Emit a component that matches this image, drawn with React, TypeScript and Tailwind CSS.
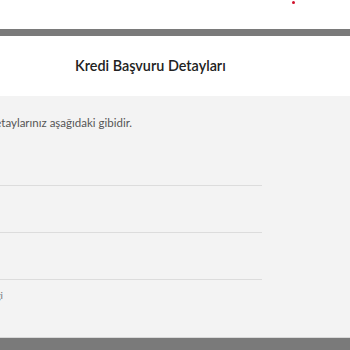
export default function App() {
  return (
    <div className="w-[350px] h-[350px] overflow-hidden bg-[#f3f3f3] flex flex-col font-['Lato',sans-serif]">
      {/* top white strip */}
      <div className="h-[29px] bg-white relative shrink-0">
        <span className="absolute left-[292px] top-[1px] w-[3px] h-[3px] rounded-full bg-[#d0112b]" />
      </div>
      <div className="h-[7px] bg-[#7a7a7a] shrink-0" />
      {/* header */}
      <div className="h-[60px] bg-white flex items-center shrink-0 pl-[75px]">
        <h1 className="text-[14.4px] font-semibold text-[#222]">Kredi Başvuru Detayları</h1>
      </div>
      {/* content */}
      <div className="flex-1 flex flex-col">
        <div className="ml-[-55px] w-[317px]">
          <p className="mt-[19px] text-[11.5px] text-[#555] leading-[16px]">Başvuru detaylarınız aşağıdaki gibidir.</p>
          <div className="mt-[54px] h-[1px] bg-[#dcdcdc]" />
          <div className="mt-[46px] h-[1px] bg-[#dcdcdc]" />
          <div className="mt-[46px] h-[1px] bg-[#dcdcdc]" />
          <div className="mt-[8px] w-[58px] whitespace-nowrap flex justify-end">
            <span className="text-[10px] text-[#777] leading-[14px]">Detaylı bilgi</span>
          </div>
        </div>
        <div className="flex-1" />
        <div className="h-[1px] bg-[#d8d8d8] shrink-0" />
        <div className="h-[12px] bg-[#7a7a7a] shrink-0" />
      </div>
    </div>
  )
}
